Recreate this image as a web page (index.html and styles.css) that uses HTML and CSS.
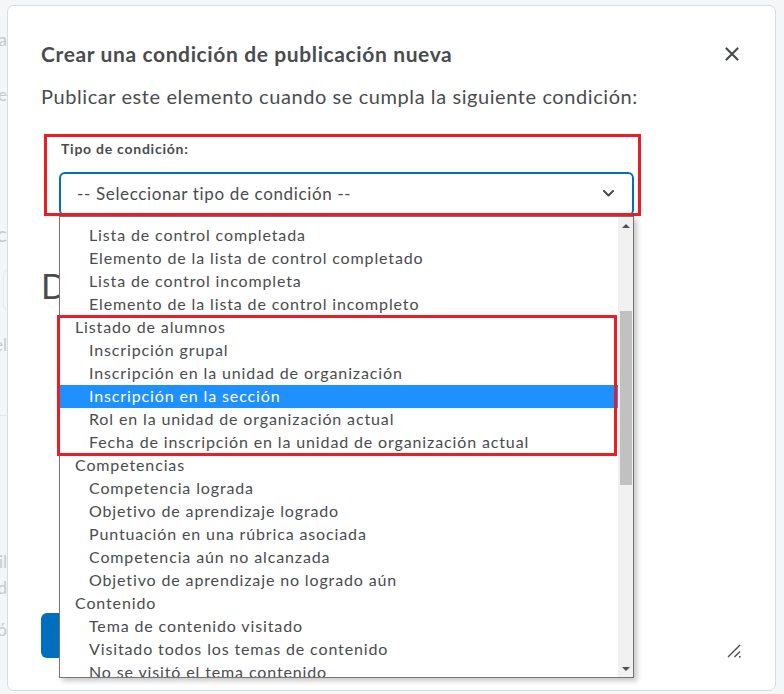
FILE: index.html
```html
<!DOCTYPE html>
<html lang="es">
<head>
<meta charset="utf-8">
<title>Crear una condición de publicación nueva</title>
<link rel="stylesheet" href="styles.css">
</head>
<body>
<div class="page">
  <div class="edge">
    <div class="edge-line l1">Pa</div>
    <div class="edge-line l2">de</div>
    <div class="edge-line l3">Tc</div>
    <div class="edge-box"></div>
    <div class="edge-line l4">Nivel</div>
    <div class="edge-rule"></div>
    <div class="edge-line l5">il</div>
    <div class="edge-line l6">ad</div>
    <div class="edge-line l7">có</div>
  </div>
</div>

<div class="dialog">
  <div class="header">
    <h1 class="title">Crear una condición de publicación nueva</h1>
    <span class="close" aria-label="Cerrar">
      <svg width="14" height="14" viewBox="0 0 14 14"><path d="M1.5 1.5l11 11M12.5 1.5l-11 11" stroke="#494c4e" stroke-width="2.2" stroke-linecap="round" fill="none"/></svg>
    </span>
  </div>
  <p class="subtitle">Publicar este elemento cuando se cumpla la siguiente condición:</p>
  <div class="field-label">Tipo de condición:</div>
  <div class="select">
    <span class="select-text">-- Seleccionar tipo de condición --</span>
    <svg class="chevron" width="11" height="7" viewBox="0 0 11 7"><path d="M1 1l4.5 4.5L10 1" stroke="#494c4e" stroke-width="2" fill="none" stroke-linecap="round" stroke-linejoin="round"/></svg>
  </div>
  <h2 class="section-title">Detalles de condiciones</h2>
  <div class="actions">
    <span class="btn-primary">Crear</span>
  </div>
  <svg class="resize" width="14" height="14" viewBox="0 0 14 14"><path d="M1 13L13 1M7.5 13L13 7.5" stroke="#494c4e" stroke-width="1.4" fill="none"/><rect x="12" y="12" width="1.6" height="1.6" fill="#494c4e"/></svg>
</div>

<div class="listbox">
  <div class="options">
    <div class="opt">Lista de control completada</div>
    <div class="opt">Elemento de la lista de control completado</div>
    <div class="opt">Lista de control incompleta</div>
    <div class="opt">Elemento de la lista de control incompleto</div>
    <div class="opt group">Listado de alumnos</div>
    <div class="opt">Inscripción grupal</div>
    <div class="opt">Inscripción en la unidad de organización</div>
    <div class="opt selected">Inscripción en la sección</div>
    <div class="opt">Rol en la unidad de organización actual</div>
    <div class="opt">Fecha de inscripción en la unidad de organización actual</div>
    <div class="opt group">Competencias</div>
    <div class="opt">Competencia lograda</div>
    <div class="opt">Objetivo de aprendizaje logrado</div>
    <div class="opt">Puntuación en una rúbrica asociada</div>
    <div class="opt">Competencia aún no alcanzada</div>
    <div class="opt">Objetivo de aprendizaje no logrado aún</div>
    <div class="opt group">Contenido</div>
    <div class="opt">Tema de contenido visitado</div>
    <div class="opt">Visitado todos los temas de contenido</div>
    <div class="opt">No se visitó el tema contenido</div>
    <div class="opt">Tema de contenido no visitado</div>
  </div>
  <div class="scrollbar">
    <div class="sb-arrow"><span class="tri-up"></span></div>
    <div class="sb-track"><div class="sb-thumb"></div></div>
    <div class="sb-arrow"><span class="tri-down"></span></div>
  </div>
</div>

<div class="mark mark-field"></div>
<div class="mark mark-group"></div>
</body>
</html>
```

FILE: styles.css
```css
html, body {
  margin: 0;
  padding: 0;
}

body {
  width: 784px;
  height: 694px;
  position: relative;
  overflow: hidden;
  background: #f5f6f7;
  font-family: Lato, "Noto Sans", sans-serif;
  color: #494c4e;
}

/* faint page behind the modal */
.page {
  height: 100%;
}

.edge {
  width: 7px;
  overflow: hidden;
  display: flex;
  flex-direction: column;
  color: #c6c9cd;
  font-size: 17px;
  line-height: 20px;
  padding-top: 30px;
}

.edge-line {
  display: flex;
  justify-content: flex-end;
  white-space: nowrap;
}

.l2 { margin-top: 35px; }
.l3 { margin-top: 116px; font-size: 22px; line-height: 26px; }
.edge-box {
  margin-top: 22px;
  margin-left: 3px;
  width: 20px;
  height: 42px;
  border: 1px solid #e6e8eb;
  border-radius: 6px;
  box-sizing: border-box;
}
.l4 { margin-top: 24px; }
.edge-rule {
  margin-top: 60px;
  height: 1px;
  background: #e3e5e8;
}
.l5 { margin-top: 136px; }
.l6 { margin-top: 6px; }
.l7 { margin-top: 22px; }

/* dialog */
.dialog {
  position: absolute;
  left: 7px;
  top: 5px;
  width: 769px;
  height: 686px;
  box-sizing: border-box;
  background: #fff;
  border: 1px solid #d8dce1;
  border-radius: 7px;
  padding: 34px 36px 32px 33px;
  display: flex;
  flex-direction: column;
}

.header {
  display: flex;
  align-items: center;
  justify-content: space-between;
}

.title {
  margin: 0;
  font-size: 21px;
  letter-spacing: 0.62px;
  line-height: 28px;
  font-weight: 700;
  color: #494c4e;
}

.close {
  display: flex;
  width: 14px;
  height: 14px;
}

.subtitle {
  margin: 16px 0 0;
  font-size: 20px;
  letter-spacing: 0.58px;
  line-height: 24px;
  color: #494c4e;
}

.field-label {
  margin-top: 31px;
  padding-left: 20px;
  font-size: 14px;
  letter-spacing: 0.75px;
  line-height: 20px;
  font-weight: 700;
}

.select {
  margin: 13px 0 0 18px;
  width: 575px;
  height: 44px;
  box-sizing: border-box;
  border: 2px solid #006fbf;
  border-radius: 6px;
  display: flex;
  align-items: center;
  justify-content: space-between;
  padding: 0 18px 2px 16px;
  font-size: 17px;
  letter-spacing: 0.65px;
}

.section-title {
  margin: 50px 0 0;
  font-size: 34px;
  line-height: 40px;
  font-weight: 400;
  color: #494c4e;
  white-space: nowrap;
}

.actions {
  margin-top: auto;
  display: flex;
}

.btn-primary {
  display: flex;
  align-items: center;
  justify-content: center;
  width: 90px;
  height: 45px;
  border-radius: 6px;
  background: #006fbf;
  color: #fff;
  font-size: 16px;
  font-weight: 700;
}

.resize {
  position: absolute;
  right: 34px;
  bottom: 32px;
}

/* open dropdown list */
.listbox {
  position: absolute;
  left: 59px;
  top: 216px;
  width: 575px;
  height: 462px;
  box-sizing: border-box;
  background: #fff;
  border: 1px solid #767676;
  box-shadow: 3px 3px 5px rgba(0, 0, 0, 0.22);
  display: flex;
}

.options {
  flex: 1;
  overflow: hidden;
  padding-top: 7px;
}

.opt {
  height: 23px;
  line-height: 22px;
  font-size: 16px;
  letter-spacing: 0.87px;
  padding-left: 29px;
  white-space: nowrap;
  color: #494c4e;
}

.opt.group {
  padding-left: 15px;
}

.opt.selected {
  background: #1e90ff;
  color: #fff;
}

.scrollbar {
  width: 15px;
  background: #f1f1f1;
  display: flex;
  flex-direction: column;
}

.sb-arrow {
  height: 17px;
  display: flex;
  align-items: center;
  justify-content: center;
}

.tri-up, .tri-down {
  width: 0;
  height: 0;
  border-left: 4px solid transparent;
  border-right: 4px solid transparent;
}

.tri-up { border-bottom: 4px solid #505050; }
.tri-down { border-top: 4px solid #505050; }

.sb-track {
  flex: 1;
  padding: 77px 1px 0 2px;
}

.sb-thumb {
  height: 174px;
  background: #c1c1c1;
}

/* red annotation boxes */
.mark {
  position: absolute;
  border: 3px solid #ec1c24;
  box-sizing: border-box;
}

.mark-field {
  left: 44px;
  top: 134px;
  width: 597px;
  height: 82px;
}

.mark-group {
  left: 57px;
  top: 315px;
  width: 560px;
  height: 141px;
}
```
